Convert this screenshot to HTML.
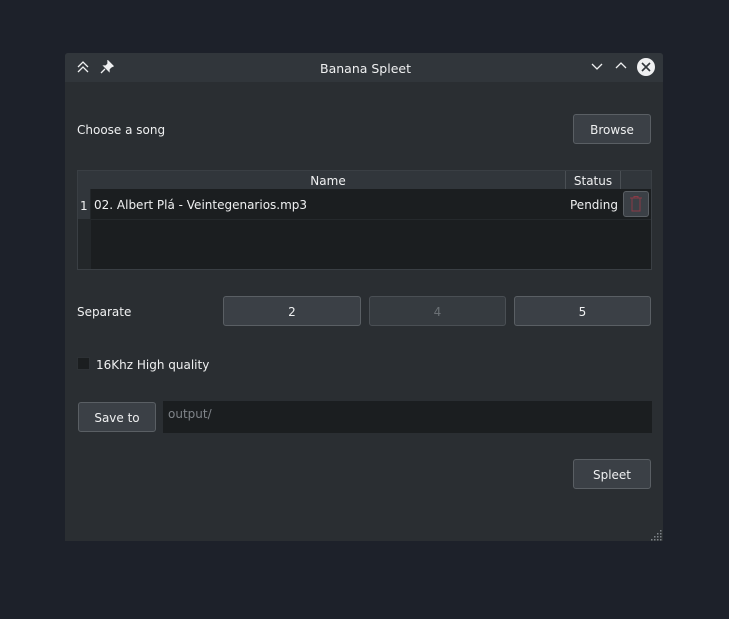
<!DOCTYPE html>
<html><head><style>
body{margin:0;width:729px;height:619px;background:#1d212a;font-family:"DejaVu Sans","Liberation Sans",sans-serif;font-size:12px;color:#eff0f1;position:relative;overflow:hidden}
.a{position:absolute}
.win{left:65px;top:53px;width:598px;height:488px;background:#2a2e32;border-radius:3px 3px 0 0}
.tb{left:65px;top:53px;width:598px;height:29px;background:#31363b;border-radius:3px 3px 0 0}
.btn{background:#3b4046;border:1px solid #5a5f64;border-radius:3px;box-sizing:border-box;text-align:center;color:#eff0f1;padding-top:1px}
.t{white-space:nowrap;margin-top:1px}
</style></head><body>
<div class="a win"></div>
<div class="a tb"></div>
<svg class="a" style="left:75px;top:60px" width="16" height="14"><path d="M3 7l5-5 5 5M3 12l5-5 5 5" stroke="#eff0f1" stroke-width="1.3" fill="none"/></svg>
<svg class="a" style="left:100px;top:60px" width="14" height="14"><path d="M8 1l5 5-2 1-2 2 0 2-5-5 2 0 2-2zM5 9l-4 4" stroke="#eff0f1" stroke-width="1.3" fill="#eff0f1"/></svg>
<div class="a t" style="left:1px;width:729px;text-align:center;top:60px;font-size:12.5px">Banana Spleet</div>
<svg class="a" style="left:590px;top:61px" width="14" height="12"><path d="M2 3l5 5 5-5" stroke="#eff0f1" stroke-width="1.3" fill="none"/></svg>
<svg class="a" style="left:614px;top:59px" width="14" height="12"><path d="M2 9l5-5 5 5" stroke="#eff0f1" stroke-width="1.3" fill="none"/></svg>
<svg class="a" style="left:636px;top:57px" width="20" height="20"><circle cx="10" cy="10" r="9" fill="#eff0f1"/><path d="M6 6l8 8M14 6l-8 8" stroke="#31363b" stroke-width="1.6"/></svg>

<div class="a t" style="left:77px;top:122px">Choose a song</div>
<div class="a btn" style="left:573px;top:114px;width:78px;height:30px;line-height:28px">Browse</div>

<div class="a" style="left:77px;top:170px;width:575px;height:100px;background:#1b1e20;border:1px solid #3a3f44;box-sizing:border-box"></div>
<div class="a" style="left:78px;top:171px;width:573px;height:18px;background:#31363b"></div>
<div class="a" style="left:565px;top:171px;width:1px;height:18px;background:#4a4f54"></div>
<div class="a" style="left:620px;top:171px;width:1px;height:18px;background:#4a4f54"></div>
<div class="a t" style="left:91px;width:474px;text-align:center;top:173px">Name</div>
<div class="a t" style="left:566px;width:54px;text-align:center;top:173px">Status</div>
<div class="a" style="left:78px;top:189px;width:13px;height:80px;background:#23272a"></div>
<div class="a" style="left:78px;top:189px;width:12px;height:30px;background:#31363b"></div>
<div class="a t" style="left:80px;top:198px">1</div>
<div class="a" style="left:91px;top:219px;width:560px;height:1px;background:#25292c"></div>
<div class="a t" style="left:94px;top:197px">02. Albert Plá - Veintegenarios.mp3</div>
<div class="a t" style="left:570px;top:197px">Pending</div>
<div class="a btn" style="left:623px;top:191px;width:26px;height:26px"></div>
<svg class="a" style="left:628px;top:195px" width="16" height="18"><path d="M2 3h12M6 3V1.5h4V3M4 3v13h8V3" stroke="#8a3a46" stroke-width="1" fill="none"/></svg>

<div class="a t" style="left:77px;top:304px">Separate</div>
<div class="a btn" style="left:223px;top:296px;width:138px;height:30px;line-height:28px">2</div>
<div class="a btn" style="left:369px;top:296px;width:137px;height:30px;line-height:28px;color:#6b7075;background:#363b40;border-color:#4a4f54">4</div>
<div class="a btn" style="left:514px;top:296px;width:137px;height:30px;line-height:28px">5</div>

<div class="a" style="left:77px;top:357px;width:13px;height:13px;background:#1b1e20;border:1px solid #2d3135;box-sizing:border-box"></div>
<div class="a t" style="left:96px;top:357px">16Khz High quality</div>

<div class="a btn" style="left:78px;top:402px;width:78px;height:30px;line-height:28px">Save to</div>
<div class="a" style="left:163px;top:401px;width:489px;height:32px;background:#1b1e20"></div>
<div class="a t" style="left:168px;top:406px;color:#7f8489">output/</div>

<div class="a btn" style="left:573px;top:459px;width:78px;height:30px;line-height:28px">Spleet</div>
<svg class="a" style="left:651px;top:529px" width="12" height="12"><g fill="#7f8489"><rect x="9" y="1" width="1.5" height="1.5"/><rect x="6" y="4" width="1.5" height="1.5"/><rect x="9" y="4" width="1.5" height="1.5"/><rect x="3" y="7" width="1.5" height="1.5"/><rect x="6" y="7" width="1.5" height="1.5"/><rect x="9" y="7" width="1.5" height="1.5"/><rect x="0" y="10" width="1.5" height="1.5"/><rect x="3" y="10" width="1.5" height="1.5"/><rect x="6" y="10" width="1.5" height="1.5"/><rect x="9" y="10" width="1.5" height="1.5"/></g></svg>
</body></html>
